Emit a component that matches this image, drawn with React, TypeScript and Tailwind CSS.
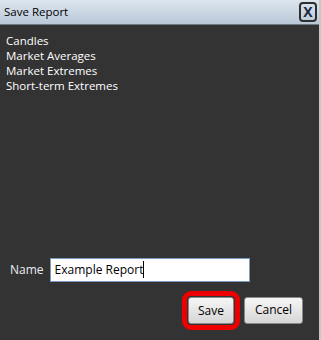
import React from 'react';

const items = ['Candles', 'Market Averages', 'Market Extremes', 'Short-term Extremes'];

export default function App() {
    return (
        <div className="w-[321px] h-[340px] flex flex-col bg-[#333333] border-r-2 border-[#c8c8c8]" style={{ fontFamily: '"Open Sans", "Noto Sans", sans-serif' }}>
            <div className="h-[25px] shrink-0 flex items-center justify-between pl-[4px] pr-[2px] bg-gradient-to-b from-[#dde6ee] to-[#b9c8d8] border-b border-[#6b7a88]">
                <span className="text-[11.5px] text-black leading-none">Save Report</span>
                <button className="w-[18px] h-[20px] flex items-center justify-center border-2 border-[#2e2e2e] rounded-[4px] text-[14px] font-bold text-[#1c2a44] leading-none">X</button>
            </div>
            <div className="flex-1 flex flex-col">
                <ul className="pt-[8px] pl-[6px] text-[11.5px] leading-[15px] text-white">
                    {items.map(item => (
                        <li key={item}>{item}</li>
                    ))}
                </ul>
                <div className="mt-auto flex items-center pl-[10px] gap-[6px]">
                    <span className="text-[12px] text-[#e8edf2]">Name</span>
                    <div className="w-[200px] h-[24px] bg-white border border-[#7a9cc0] flex items-center pl-[4px] text-[12px] text-black">
                        Example Report<span className="w-px h-[17px] bg-black" />
                    </div>
                </div>
                <div className="flex justify-end items-center gap-[4px] pr-[16px] pt-[9px] pb-[10px]">
                    <div className="p-px rounded-[9px] border-[5px] border-[#ee0000]">
                        <button className="w-[46px] h-[27px] rounded-[3px] border border-[#8a8a8a] bg-gradient-to-b from-[#f6f6f6] to-[#d6d6d6] text-[12px] text-black">Save</button>
                    </div>
                    <button className="w-[59px] h-[27px] rounded-[3px] border border-[#8a8a8a] bg-gradient-to-b from-[#f6f6f6] to-[#d6d6d6] text-[12px] text-black">Cancel</button>
                </div>
            </div>
        </div>
    );
}
